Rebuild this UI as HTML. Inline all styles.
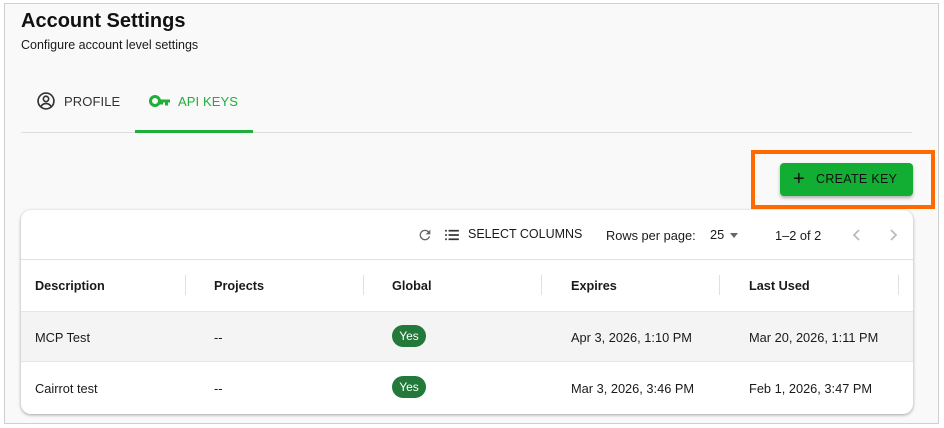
<!DOCTYPE html>
<html><head><style>
*{box-sizing:border-box;margin:0;padding:0}
body{width:944px;height:428px;background:#fff;font-family:"Liberation Sans",sans-serif;color:#1a1a1a;position:relative;overflow:hidden}
.frame{position:absolute;left:4px;top:3px;width:935px;height:421px;background:#f9f9f9;border:1px solid #cfcfcf}
.abs{position:absolute}
h1{position:absolute;left:21px;top:10px;font-size:20px;font-weight:bold;color:#111}
.sub{left:21px;top:38px;font-size:12.5px}
.tab{top:94px;font-size:13px;letter-spacing:.1px}
.card{left:21px;top:210px;width:892px;height:204px;background:#fff;border-radius:10px;box-shadow:0 1px 3px rgba(0,0,0,.35);overflow:hidden}
.th{top:279px;font-size:12.7px;font-weight:bold}
.td{font-size:12.8px}
.sep{width:1px;height:20px;background:#e0e0e0;top:275px}
.yes{background:#23793a;color:#fff;font-size:12px;border-radius:11px;width:34px;height:22px;line-height:22px;text-align:center}
</style></head><body>
<div class="frame"></div>
<h1>Account Settings</h1>
<div class="abs sub">Configure account level settings</div>
<svg class="abs" style="left:36px;top:91px" width="20" height="20" viewBox="0 0 24 24"><circle cx="12" cy="12" r="9.5" fill="none" stroke="#333" stroke-width="2"/><circle cx="12" cy="9.5" r="3.2" fill="none" stroke="#333" stroke-width="2"/><path d="M6 18.5c1.5-2.5 3.5-3.5 6-3.5s4.5 1 6 3.5" fill="none" stroke="#333" stroke-width="2"/></svg>
<div class="abs tab" style="left:64px;color:#333">PROFILE</div>
<svg class="abs" style="left:149px;top:93px" width="22" height="16" viewBox="0 0 22 16"><circle cx="6" cy="8" r="4.5" fill="none" stroke="#1fae3a" stroke-width="3"/><path d="M10 6.5h11v3h-2v3h-3v-3h-2v2h-3z" fill="#1fae3a"/></svg>
<div class="abs tab" style="left:178px;color:#1fae3a">API KEYS</div>
<div class="abs" style="left:21px;top:132px;width:891px;height:1px;background:#ddd"></div>
<div class="abs" style="left:135px;top:130px;width:118px;height:3px;background:#1fae3a"></div>
<div class="abs" style="left:751px;top:150px;width:184px;height:59px;border:4px solid #ff6a00"></div>
<div class="abs" style="left:780px;top:163px;width:133px;height:33px;background:#12ad33;border-radius:4px;box-shadow:0 2px 3px rgba(0,0,0,.3);font-size:12.5px;color:#111;line-height:33px;padding-left:36px;letter-spacing:.3px">CREATE KEY</div>
<div class="abs" style="left:793px;top:168px;font-size:20px;color:#111">+</div>
<div class="abs card"></div>
<svg class="abs" style="left:417px;top:227px" width="16" height="16" viewBox="0 0 24 24"><path d="M17.6 6.4A8 8 0 1 0 19.7 14h-2.1a6 6 0 1 1-1.4-6.2L13 11h7V4z" fill="#666"/></svg>
<svg class="abs" style="left:445px;top:229px" width="14" height="12" viewBox="0 0 16 14"><g fill="#333"><rect x="0" y="1" width="2" height="2"/><rect x="0" y="6" width="2" height="2"/><rect x="0" y="11" width="2" height="2"/><rect x="4" y="1" width="12" height="2"/><rect x="4" y="6" width="12" height="2"/><rect x="4" y="11" width="12" height="2"/></g></svg>
<div class="abs td" style="left:468px;top:227px;font-size:12.5px">SELECT COLUMNS</div>
<div class="abs td" style="left:606px;top:228px">Rows per page:</div>
<div class="abs td" style="left:710px;top:227px">25</div>
<div class="abs" style="left:730px;top:233px;border:4px solid transparent;border-top:5px solid #666"></div>
<div class="abs td" style="left:775px;top:228px">1–2 of 2</div>
<svg class="abs" style="left:852px;top:228px" width="10" height="14" viewBox="0 0 10 14"><path d="M7 2L2 7l5 5" fill="none" stroke="#bbb" stroke-width="1.8"/></svg>
<svg class="abs" style="left:888px;top:228px" width="10" height="14" viewBox="0 0 10 14"><path d="M3 2l5 5-5 5" fill="none" stroke="#bbb" stroke-width="1.8"/></svg>
<div class="abs" style="left:21px;top:259px;width:892px;height:1px;background:#e0e0e0"></div>
<div class="abs th" style="left:35px">Description</div>
<div class="abs th" style="left:214px">Projects</div>
<div class="abs th" style="left:392px">Global</div>
<div class="abs th" style="left:571px">Expires</div>
<div class="abs th" style="left:749px">Last Used</div>
<div class="abs sep" style="left:185px"></div><div class="abs sep" style="left:363px"></div><div class="abs sep" style="left:541px"></div><div class="abs sep" style="left:719px"></div><div class="abs sep" style="left:898px"></div>
<div class="abs" style="left:21px;top:311px;width:892px;height:51px;background:#f4f4f4;border-top:1px solid #e6e6e6;border-bottom:1px solid #e6e6e6"></div>
<div class="abs td" style="left:35px;top:330px">MCP Test</div>
<div class="abs td" style="left:214px;top:330px">--</div>
<div class="abs yes" style="left:392px;top:325px">Yes</div>
<div class="abs td" style="left:571px;top:330px">Apr 3, 2026, 1:10 PM</div>
<div class="abs td" style="left:749px;top:330px">Mar 20, 2026, 1:11 PM</div>
<div class="abs td" style="left:35px;top:381px">Cairrot test</div>
<div class="abs td" style="left:214px;top:381px">--</div>
<div class="abs yes" style="left:392px;top:376px">Yes</div>
<div class="abs td" style="left:571px;top:381px">Mar 3, 2026, 3:46 PM</div>
<div class="abs td" style="left:749px;top:381px">Feb 1, 2026, 3:47 PM</div>
</body></html>
